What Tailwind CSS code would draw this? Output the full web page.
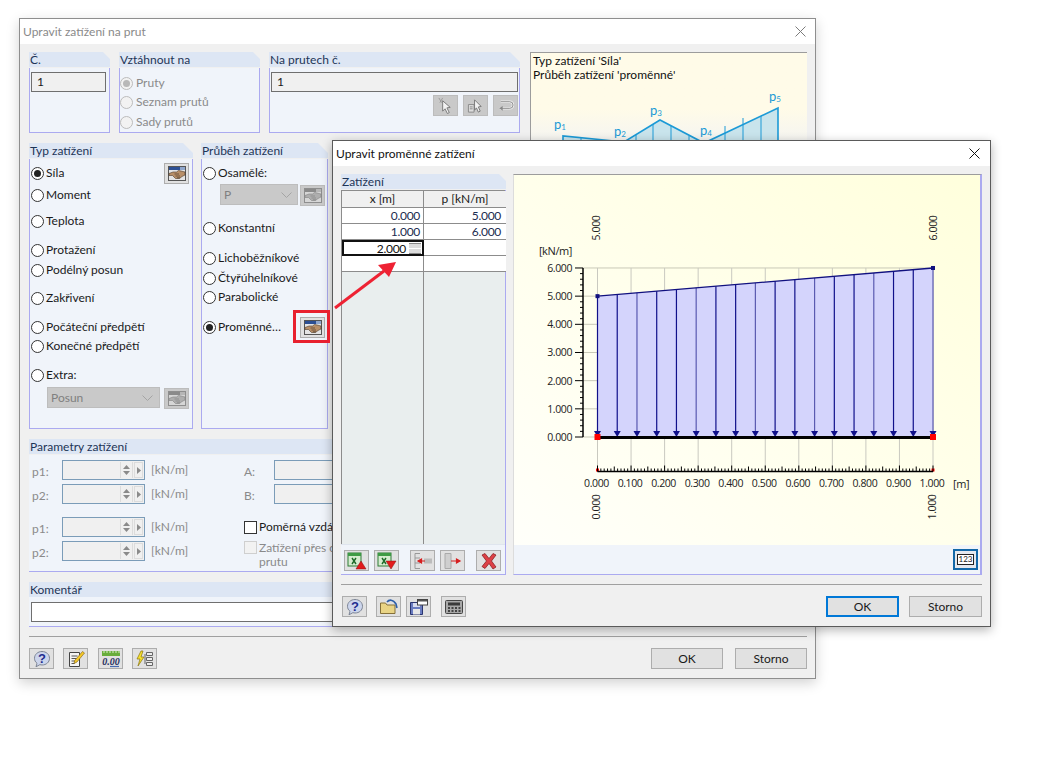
<!DOCTYPE html>
<html lang="en">
<head>
  <meta charset="UTF-8">
  <title>Upravit zatížení na prut</title>
  <script src="https://cdn.jsdelivr.net/npm/@tailwindcss/browser@4"></script>
</head>
<body class="bg-white">
  <svg width="0" height="0" class="absolute">
    <symbol id="i-hand" viewBox="0 0 18 15">
      <rect x="0.5" y="0.5" width="17" height="14" fill="#e4e4e4" stroke="#555"/>
      <rect x="1" y="1" width="11" height="3" fill="#2c4f94"/>
      <rect x="12" y="1" width="5" height="3" fill="#8fa6cc"/>
      <path d="M1 7.500l4-1.500h3.500l2-1.500 2.500.5 4 1v3l-3 1.500-2.500 2H7.500L4.500 9.500H1z" fill="#b88f68" stroke="#4e3a28" stroke-width=".6"/>
      <path d="M6.500 8h4.500M7.500 10h4.500M9 11.800h3" stroke="#4e3a28" stroke-width=".7"/>
    </symbol>
    <symbol id="i-bubble" viewBox="0 0 18 18">
      <path d="M9 1.500c4.200 0 7.500 2.900 7.500 6.800S13.200 15 9 15c-.8 0-1.500-.1-2.200-.3L3 16.800l1-3.500C2.400 12 1.500 10.300 1.500 8.300 1.500 4.400 4.800 1.500 9 1.500z" fill="#ccd5ec" stroke="#7d8595"/>
    </symbol>
    <symbol id="i-note" viewBox="0 0 18 18">
      <path d="M2.500 2.500h10v14h-10z" fill="#f4f4f4" stroke="#444"/>
      <path d="M4.500 6h6M4.500 8.500h5M4.500 11h4M4.500 13.500h3" stroke="#555"/>
      <path d="M15.500 1.500l2 1.500L10 12l-3 1.500.7-3z" fill="#f6c928" stroke="#7a5a10" stroke-width=".6"/>
    </symbol>
    <symbol id="i-bolt" viewBox="0 0 20 18">
      <path d="M6 1L2 9h3l-2 7 6-9H6l2-6z" fill="#f7e02c" stroke="#8a7510" stroke-width=".7"/>
      <path d="M11.500 2.500h6v3h-6zM11.500 7.500h6v3h-6zM11.500 12.500h6v3h-6z" fill="#ececec" stroke="#666"/>
      <path d="M10 4v10" stroke="#666"/>
    </symbol>
    <symbol id="i-xls-up" viewBox="0 0 20 18">
      <rect x="1" y="1" width="13" height="13" fill="#d6ecd0" stroke="#2f7d36"/>
      <path d="M1 1h13v3H1z" fill="#3e9b45"/>
      <path d="M5 6l4 6M9 6l-4 6" stroke="#1c6a28" stroke-width="1.400"/>
      <path d="M14 9l5 8H9z" fill="#e21a1a" stroke="#8a1010" stroke-width=".5"/>
    </symbol>
    <symbol id="i-xls-down" viewBox="0 0 20 18">
      <rect x="1" y="1" width="13" height="13" fill="#d6ecd0" stroke="#2f7d36"/>
      <path d="M1 1h13v3H1z" fill="#3e9b45"/>
      <path d="M5 6l4 6M9 6l-4 6" stroke="#1c6a28" stroke-width="1.400"/>
      <path d="M9 9h10l-5 8z" fill="#e21a1a" stroke="#8a1010" stroke-width=".5"/>
    </symbol>
    <symbol id="i-col-in" viewBox="0 0 20 18">
      <path d="M7 1.500H2v15h5M2 6h5M2 11h5" fill="none" stroke="#999"/>
      <rect x="11" y="6.500" width="8" height="5" fill="#bcbcbc"/>
      <path d="M12 9H6M8.500 7L5 9l3.500 2z" fill="#d62020" stroke="#d62020" stroke-width="1.200"/>
    </symbol>
    <symbol id="i-col-out" viewBox="0 0 20 18">
      <path d="M2 1.500h6v15H2z" fill="#cfcfcf" stroke="#aaa"/>
      <path d="M8 9h8M13.500 7L17 9l-3.500 2z" fill="#d62020" stroke="#d62020" stroke-width="1.200"/>
    </symbol>
    <symbol id="i-del" viewBox="0 0 18 18">
      <path d="M2 3l3-1.500L9 6.500l4-5 3 1.500-4.500 6 4.500 6-3 2L9 11.500 5 16.500l-3-2L6.500 9z" fill="#dd4046" stroke="#7f1518" stroke-width=".7"/>
    </symbol>
    <symbol id="i-open" viewBox="0 0 20 18">
      <path d="M1.500 5h5l1.500 2h8v8.500h-14.500z" fill="#e9d485" stroke="#85703a"/>
      <path d="M8 4c2-2.500 6-3 9 2l1 4" fill="none" stroke="#2d5fa8" stroke-width="1.600"/>
    </symbol>
    <symbol id="i-save" viewBox="0 0 20 18">
      <path d="M1.500 4.500h12v12h-12z" fill="#6a7cc0" stroke="#2a3570"/>
      <rect x="4" y="11" width="7" height="5.500" fill="#e8e8e8"/>
      <rect x="4" y="5" width="7" height="4" fill="#d8ddf0"/>
      <rect x="8.500" y="1.500" width="10" height="5.500" fill="#fff" stroke="#444"/>
      <rect x="9" y="2" width="9" height="1.500" fill="#555"/>
    </symbol>
    <symbol id="i-calc" viewBox="0 0 20 18">
      <rect x="1.500" y="2.500" width="17" height="13" rx="1" fill="#a8a8a8" stroke="#444"/>
      <rect x="4" y="4.500" width="12" height="3" fill="#3a3a3a"/>
      <path d="M4 10h2M7.500 10h2M11 10h2M14.500 10h2M4 13h2M7.500 13h2M11 13h2M14.500 13h2" stroke="#222" stroke-width="1.500"/>
    </symbol>
    <symbol id="i-pick" viewBox="0 0 18 18">
      <path d="M2 1l3 5M6 1L3 6" stroke="#999"/>
      <path d="M6 4l8 7-3.500.5 2.500 5-2 1-2.500-5L6 15z" fill="#f2f2f2" stroke="#777"/>
    </symbol>
    <symbol id="i-pick-list" viewBox="0 0 18 18">
      <path d="M1.500 8h6v8h-6z" fill="#ddd" stroke="#888"/>
      <path d="M3 10.500h3M3 12.500h3" stroke="#888"/>
      <path d="M8 3l7 7-3 .5 2 4.500-2 1-2-4.500L8 14z" fill="#f2f2f2" stroke="#777"/>
    </symbol>
    <symbol id="i-back" viewBox="0 0 18 18">
      <path d="M4 5h9.500a3.500 3.500 0 010 7H3" fill="none" stroke="#f0f0f0" stroke-width="2.500"/>
      <path d="M4 5h9.500a3.500 3.500 0 010 7H3" fill="none" stroke="#888" stroke-width="1"/>
      <path d="M6 9.500L2.500 12 6 14.500z" fill="#888"/>
    </symbol>
  </svg>

  <div class="relative w-[1040px] h-[780px] overflow-hidden bg-white text-[12px] text-[#1a1a1a] font-['Lato',sans-serif]">

    <!-- main dialog -->
    <div class="absolute left-[19px] top-[18px] w-[797px] h-[661px] flex flex-col bg-[#f0f0f0] border border-[#8e8e8e] shadow-[0_4px_12px_rgba(0,0,0,0.18)]">
      <div class="h-[25px] shrink-0 bg-white flex items-center justify-between pl-[3px] pr-[9px] text-[#8a8a8a]">
        <span>Upravit zatížení na prut</span>
        <svg width="11" height="11" viewBox="0 0 11 11"><path d="M.5.5l10 10M10.500.5l-10 10" stroke="#7c7c7c"/></svg>
      </div>
      <div class="flex-1 flex flex-col pl-[9px] pr-[8px] pt-[8px]">
        <div class="flex gap-[10px] h-[377px]">
          <div class="w-[491px] shrink-0 flex flex-col gap-[10px]">
            <div class="flex gap-[9px] h-[81px]">
              <section class="w-[81px] flex flex-col">
                <h3 class="h-[15px] pl-px leading-[15px] font-normal text-[#1d3557] bg-[#dde6f4] [clip-path:polygon(0_0,calc(100%-7px)_0,100%_7px,100%_100%,0_100%)]">Č.</h3>
                <div class="flex-1 mt-px bg-[#f0f4fa] border-x border-b border-[#abaaf0] pl-px pt-[4px]">
                  <div class="w-[75px] h-[20px] bg-[#f0f0f0] border border-[#6f6f6f] pl-[5px] leading-[18px]">1</div>
                </div>
              </section>
              <section class="w-[141px] flex flex-col">
                <h3 class="h-[15px] pl-px leading-[15px] font-normal text-[#1d3557] bg-[#dde6f4] [clip-path:polygon(0_0,calc(100%-7px)_0,100%_7px,100%_100%,0_100%)]">Vztáhnout na</h3>
                <div class="flex-1 mt-px bg-[#f0f4fa] border-x border-b border-[#abaaf0] pt-[8px] text-[#8a8a8a]">
                  <div class="h-[14px] flex items-center gap-[3px]"><span class="w-[13px] h-[13px] rounded-full border border-[#bcbcbc] bg-[#f2f2f2] flex items-center justify-center"><span class="w-[7px] h-[7px] rounded-full bg-[#b8b8b8]"></span></span>Pruty</div>
                  <div class="h-[14px] mt-[5px] flex items-center gap-[3px]"><span class="w-[13px] h-[13px] rounded-full border border-[#bcbcbc] bg-[#f2f2f2]"></span>Seznam prutů</div>
                  <div class="h-[14px] mt-[6px] flex items-center gap-[3px]"><span class="w-[13px] h-[13px] rounded-full border border-[#bcbcbc] bg-[#f2f2f2]"></span>Sady prutů</div>
                </div>
              </section>
              <section class="flex-1 flex flex-col">
                <h3 class="h-[15px] pl-px leading-[15px] font-normal text-[#1d3557] bg-[#dde6f4] [clip-path:polygon(0_0,calc(100%-10px)_0,100%_10px,100%_100%,0_100%)]">Na prutech č.</h3>
                <div class="flex-1 mt-px bg-[#f0f4fa] border-x border-b border-[#abaaf0] pl-px pr-px pt-[4px]">
                  <div class="h-[20px] bg-[#f0f0f0] border border-[#6f6f6f] pl-[5px] leading-[18px]">1</div>
                  <div class="flex justify-end gap-[5px] mt-[3px]">
                    <button class="w-[25px] h-[21px] bg-[#c9c9c9] border border-[#bcbcbc] flex items-center justify-center"><svg width="17" height="17"><use href="#i-pick"/></svg></button>
                    <button class="w-[25px] h-[21px] bg-[#c9c9c9] border border-[#bcbcbc] flex items-center justify-center"><svg width="17" height="17"><use href="#i-pick-list"/></svg></button>
                    <button class="w-[25px] h-[21px] bg-[#c9c9c9] border border-[#bcbcbc] flex items-center justify-center"><svg width="17" height="17"><use href="#i-back"/></svg></button>
                  </div>
                </div>
              </section>
            </div>
            <div class="flex gap-[8px] flex-1 pr-[192px]">
              <section class="w-[164px] flex flex-col shrink-0">
                <h3 class="h-[15px] pl-px leading-[15px] font-normal text-[#1d3557] bg-[#dde6f4] [clip-path:polygon(0_0,calc(100%-10px)_0,100%_10px,100%_100%,0_100%)]">Typ zatížení</h3>
                <div class="flex-1 mt-px bg-[#f0f4fa] border-x border-b border-[#abaaf0] pl-px pr-[3px] pt-[7px]">
                  <div class="h-[14px] flex items-center justify-between">
                    <span class="flex items-center gap-[2px]"><span class="w-[13px] h-[13px] rounded-full border border-[#333] bg-white flex items-center justify-center"><span class="w-[7px] h-[7px] rounded-full bg-[#222]"></span></span>Síla</span>
                    <button class="w-[25px] h-[21px] bg-[#e1e1e1] border border-[#adadad] flex items-center justify-center shrink-0"><svg width="18" height="15"><use href="#i-hand"/></svg></button>
                  </div>
                  <div class="h-[14px] mt-[8px] flex items-center gap-[2px]"><span class="w-[13px] h-[13px] rounded-full border border-[#333] bg-white"></span>Moment</div>
                  <div class="h-[14px] mt-[12px] flex items-center gap-[2px]"><span class="w-[13px] h-[13px] rounded-full border border-[#333] bg-white"></span>Teplota</div>
                  <div class="h-[14px] mt-[15px] flex items-center gap-[2px]"><span class="w-[13px] h-[13px] rounded-full border border-[#333] bg-white"></span>Protažení</div>
                  <div class="h-[14px] mt-[6px] flex items-center gap-[2px]"><span class="w-[13px] h-[13px] rounded-full border border-[#333] bg-white"></span>Podélný posun</div>
                  <div class="h-[14px] mt-[14px] flex items-center gap-[2px]"><span class="w-[13px] h-[13px] rounded-full border border-[#333] bg-white"></span>Zakřivení</div>
                  <div class="h-[14px] mt-[15px] flex items-center gap-[2px]"><span class="w-[13px] h-[13px] rounded-full border border-[#333] bg-white"></span>Počáteční předpětí</div>
                  <div class="h-[14px] mt-[5px] flex items-center gap-[2px]"><span class="w-[13px] h-[13px] rounded-full border border-[#333] bg-white"></span>Konečné předpětí</div>
                  <div class="h-[14px] mt-[15px] flex items-center gap-[2px]"><span class="w-[13px] h-[13px] rounded-full border border-[#333] bg-white"></span>Extra:</div>
                  <div class="flex justify-between items-start mt-[5px] pl-[16px]">
                    <div class="w-[113px] h-[21px] bg-[#c9c9c9] border border-[#bdbdbd] flex items-center justify-between pl-[3px] pr-[6px] text-[#808080]">Posun<svg width="11" height="6" viewBox="0 0 11 6"><path d="M.5.5l5 5 5-5" fill="none" stroke="#a4a4a4"/></svg></div>
                    <button class="w-[25px] h-[21px] mt-px bg-[#c9c9c9] border border-[#bcbcbc] flex items-center justify-center"><svg width="18" height="15" class="opacity-50 grayscale"><use href="#i-hand"/></svg></button>
                  </div>
                </div>
              </section>
              <section class="w-[127px] flex flex-col shrink-0">
                <h3 class="h-[15px] pl-px leading-[15px] font-normal text-[#1d3557] bg-[#dde6f4] [clip-path:polygon(0_0,calc(100%-10px)_0,100%_10px,100%_100%,0_100%)]">Průběh zatížení</h3>
                <div class="flex-1 mt-px bg-[#f0f4fa] border-x border-b border-[#abaaf0] pl-px pt-[7px]">
                  <div class="h-[14px] flex items-center gap-[2px]"><span class="w-[13px] h-[13px] rounded-full border border-[#333] bg-white"></span>Osamělé:</div>
                  <div class="flex items-start gap-[2px] mt-[4px] pl-[17px]">
                    <div class="w-[78px] h-[21px] bg-[#c9c9c9] border border-[#bdbdbd] flex items-center justify-between pl-[3px] pr-[5px] text-[#808080]">P<svg width="11" height="6" viewBox="0 0 11 6"><path d="M.5.5l5 5 5-5" fill="none" stroke="#a4a4a4"/></svg></div>
                    <button class="w-[25px] h-[21px] mt-px bg-[#c9c9c9] border border-[#bcbcbc] flex items-center justify-center"><svg width="18" height="15" class="opacity-50 grayscale"><use href="#i-hand"/></svg></button>
                  </div>
                  <div class="h-[14px] mt-[15px] flex items-center gap-[2px]"><span class="w-[13px] h-[13px] rounded-full border border-[#333] bg-white"></span>Konstantní</div>
                  <div class="h-[14px] mt-[16px] flex items-center gap-[2px]"><span class="w-[13px] h-[13px] rounded-full border border-[#333] bg-white"></span>Lichoběžníkové</div>
                  <div class="h-[14px] mt-[6px] flex items-center gap-[2px]"><span class="w-[13px] h-[13px] rounded-full border border-[#333] bg-white"></span>Čtyřúhelníkové</div>
                  <div class="h-[14px] mt-[5px] flex items-center gap-[2px]"><span class="w-[13px] h-[13px] rounded-full border border-[#333] bg-white"></span>Parabolické</div>
                  <div class="h-[14px] mt-[16px] flex items-center justify-between pr-[2px]">
                    <span class="flex items-center gap-[2px]"><span class="w-[13px] h-[13px] rounded-full border border-[#333] bg-white flex items-center justify-center"><span class="w-[7px] h-[7px] rounded-full bg-[#222]"></span></span>Proměnné…</span>
                    <button class="w-[25px] h-[21px] bg-[#e1e1e1] border border-[#adadad] flex items-center justify-center shrink-0"><svg width="18" height="15"><use href="#i-hand"/></svg></button>
                  </div>
                </div>
              </section>
            </div>
          </div>
          <!-- preview of the load shape -->
          <div class="flex-1 relative border-t border-l border-[#9c9c9c] bg-linear-to-b from-[#fffbe8] from-[15%] to-[#f4f4f2] to-[24%] pl-[2px] pt-[1px] leading-[14px] text-[#111]">
            <p>Typ zatížení 'Síla'</p>
            <p>Průběh zatížení 'proměnné'</p>
            <svg class="absolute left-0 top-0" width="277" height="150" viewBox="530 52 277 150">
              <path d="M562 135L623 141L659 119L703 142L777 107V200H562z" fill="#c9e4ec"/>
              <path d="M580 137V200M598 139V200M616 141V200M635 134V200M652 123V200M670 125V200M688 135V200M724 125V200M742 117V200M760 115V200" stroke="#1c9ad6" stroke-width="1"/>
              <path d="M562 200V135L623 141L659 119L703 142L777 107V200" fill="none" stroke="#1c9ad6" stroke-width="1.600"/>
              <g fill="#1c9ad6" font-size="13" font-family="Lato">
                <text x="553" y="128">p<tspan font-size="8" dy="1">1</tspan></text>
                <text x="613" y="135">p<tspan font-size="8" dy="1">2</tspan></text>
                <text x="649" y="114">p<tspan font-size="8" dy="1">3</tspan></text>
                <text x="699" y="134">p<tspan font-size="8" dy="1">4</tspan></text>
                <text x="768" y="100">p<tspan font-size="8" dy="1">5</tspan></text>
              </g>
            </svg>
          </div>
        </div>

        <section class="mt-[10px] h-[133px] flex flex-col">
          <h3 class="h-[15px] pl-px leading-[15px] font-normal text-[#1d3557] bg-[#dde6f4]">Parametry zatížení</h3>
          <div class="flex-1 mt-px bg-[#f0f4fa] border-b border-[#abaaf0] flex pt-[5px] text-[#8a8a8a]">
            <div class="w-[215px] pl-[3px] shrink-0">
              <div class="h-[20px] flex items-center"><span class="w-[30px] pt-[3px]">p1:</span>
                <div class="w-[83px] h-[20px] bg-[#f0f0f0] border border-[#7b9cb8] flex items-center justify-end pr-px">
                  <span class="w-[13px] h-[16px] flex flex-col items-center justify-center gap-[2px] border-x border-[#dcdcdc]"><svg width="7" height="4"><path d="M3.500 0l3.500 4H0z" fill="#8a8a8a"/></svg><svg width="7" height="4"><path d="M0 0h7L3.500 4z" fill="#8a8a8a"/></svg></span>
                  <span class="w-[9px] h-[16px] ml-px flex items-center justify-center border border-[#dcdcdc]"><svg width="4" height="7"><path d="M0 0l4 3.500L0 7z" fill="#8a8a8a"/></svg></span>
                </div><span class="ml-[6px]">[kN/m]</span></div>
              <div class="h-[20px] mt-[4px] flex items-center"><span class="w-[30px] pt-[3px]">p2:</span>
                <div class="w-[83px] h-[20px] bg-[#f0f0f0] border border-[#7b9cb8] flex items-center justify-end pr-px">
                  <span class="w-[13px] h-[16px] flex flex-col items-center justify-center gap-[2px] border-x border-[#dcdcdc]"><svg width="7" height="4"><path d="M3.500 0l3.500 4H0z" fill="#8a8a8a"/></svg><svg width="7" height="4"><path d="M0 0h7L3.500 4z" fill="#8a8a8a"/></svg></span>
                  <span class="w-[9px] h-[16px] ml-px flex items-center justify-center border border-[#dcdcdc]"><svg width="4" height="7"><path d="M0 0l4 3.500L0 7z" fill="#8a8a8a"/></svg></span>
                </div><span class="ml-[6px]">[kN/m]</span></div>
              <div class="h-[20px] mt-[13px] flex items-center"><span class="w-[30px] pt-[3px]">p1:</span>
                <div class="w-[83px] h-[20px] bg-[#f0f0f0] border border-[#7b9cb8] flex items-center justify-end pr-px">
                  <span class="w-[13px] h-[16px] flex flex-col items-center justify-center gap-[2px] border-x border-[#dcdcdc]"><svg width="7" height="4"><path d="M3.500 0l3.500 4H0z" fill="#8a8a8a"/></svg><svg width="7" height="4"><path d="M0 0h7L3.500 4z" fill="#8a8a8a"/></svg></span>
                  <span class="w-[9px] h-[16px] ml-px flex items-center justify-center border border-[#dcdcdc]"><svg width="4" height="7"><path d="M0 0l4 3.500L0 7z" fill="#8a8a8a"/></svg></span>
                </div><span class="ml-[6px]">[kN/m]</span></div>
              <div class="h-[20px] mt-[4px] flex items-center"><span class="w-[30px] pt-[3px]">p2:</span>
                <div class="w-[83px] h-[20px] bg-[#f0f0f0] border border-[#7b9cb8] flex items-center justify-end pr-px">
                  <span class="w-[13px] h-[16px] flex flex-col items-center justify-center gap-[2px] border-x border-[#dcdcdc]"><svg width="7" height="4"><path d="M3.500 0l3.500 4H0z" fill="#8a8a8a"/></svg><svg width="7" height="4"><path d="M0 0h7L3.500 4z" fill="#8a8a8a"/></svg></span>
                  <span class="w-[9px] h-[16px] ml-px flex items-center justify-center border border-[#dcdcdc]"><svg width="4" height="7"><path d="M0 0l4 3.500L0 7z" fill="#8a8a8a"/></svg></span>
                </div><span class="ml-[6px]">[kN/m]</span></div>
            </div>
            <div class="flex-1">
              <div class="h-[20px] flex items-center"><span class="w-[30px] pt-[3px]">A:</span><div class="w-[120px] h-[20px] bg-[#f0f0f0] border border-[#7b9cb8]"></div></div>
              <div class="h-[20px] mt-[4px] flex items-center"><span class="w-[30px] pt-[3px]">B:</span><div class="w-[120px] h-[20px] bg-[#f0f0f0] border border-[#7b9cb8]"></div></div>
              <div class="h-[14px] mt-[16px] flex items-center gap-[2px] text-[#1a1a1a]"><span class="w-[13px] h-[13px] border border-[#333] bg-white"></span>Poměrná vzdálenost</div>
              <div class="mt-[7px] flex items-start gap-[2px] w-[260px]"><span class="w-[13px] h-[13px] shrink-0 border border-[#cfcfcf] bg-[#f2f2f2]"></span><span class="leading-[14px]">Zatížení přes celou délku<br>prutu</span></div>
            </div>
          </div>
        </section>

        <section class="mt-[10px] h-[45px] flex flex-col">
          <h3 class="h-[15px] pl-px leading-[15px] font-normal text-[#1d3557] bg-[#dde6f4]">Komentář</h3>
          <div class="flex-1 bg-[#f0f4fa] border-b border-[#abaaf0] pl-[2px] pr-[2px] pt-[5px]">
            <div class="h-[20px] bg-white border border-[#6f6f6f]"></div>
          </div>
        </section>

        <div class="mt-[9px] h-px bg-[#a0a0a0]"></div>

        <div class="mt-[11px] flex justify-between">
          <div class="flex">
            <button class="w-[25px] h-[21px] bg-[#e1e1e1] border border-[#adadad] flex items-center justify-center"><svg width="18" height="18" viewBox="0 0 18 18"><use href="#i-bubble"/><text x="9" y="13" text-anchor="middle" font-size="13" font-weight="700" font-family="Liberation Sans" fill="#1f2d8f">?</text></svg></button>
            <button class="w-[25px] h-[21px] ml-[9px] bg-[#e1e1e1] border border-[#adadad] flex items-center justify-center"><svg width="18" height="18"><use href="#i-note"/></svg></button>
            <button class="w-[25px] h-[21px] ml-[10px] bg-[#e1e1e1] border border-[#adadad] flex items-center justify-center"><svg width="20" height="18" viewBox="0 0 20 18"><rect x="1" y="1" width="18" height="5" fill="#68ad3c"/><path d="M3 1v2M6 1v2M9 1v2M12 1v2M15 1v2M18 1v2" stroke="#d8eec8"/><text x="10" y="14.500" text-anchor="middle" font-size="10" font-style="italic" font-weight="700" font-family="Liberation Serif" fill="#27305e">0.00</text><path d="M9 16.500h9" stroke="#4a6cb0" stroke-width="1.200"/></svg></button>
            <button class="w-[25px] h-[21px] ml-[9px] bg-[#e1e1e1] border border-[#adadad] flex items-center justify-center"><svg width="20" height="18"><use href="#i-bolt"/></svg></button>
          </div>
          <div class="flex gap-[12px]">
            <button class="w-[72px] h-[21px] bg-[#e1e1e1] border border-[#adadad]">OK</button>
            <button class="w-[72px] h-[21px] bg-[#e1e1e1] border border-[#adadad]">Storno</button>
          </div>
        </div>
      </div>
    </div>

    <!-- variable load dialog -->
    <div class="absolute left-[332px] top-[140px] w-[659px] h-[487px] flex flex-col bg-[#f0f0f0] border border-[#5a5a5a] shadow-[0_3px_10px_rgba(0,0,0,0.3)]">
      <div class="h-[25px] shrink-0 bg-white flex items-center justify-between pl-[3px] pr-[10px] text-[#111]">
        <span>Upravit proměnné zatížení</span>
        <svg width="11" height="11" viewBox="0 0 11 11"><path d="M.5.5l10 10M10.500.5l-10 10" stroke="#111"/></svg>
      </div>
      <div class="flex-1 flex flex-col px-[8px] pt-[8px]">
        <div class="h-[401px] flex gap-[7px]">
          <section class="w-[165px] flex flex-col shrink-0">
            <h3 class="h-[15px] pl-px leading-[15px] font-normal text-[#1d3557] bg-[#dde6f4] [clip-path:polygon(0_0,calc(100%-7px)_0,100%_7px,100%_100%,0_100%)]">Zatížení</h3>
            <div class="flex-1 mt-px border-r border-b border-[#abaaf0] bg-[#f0f4fa] flex flex-col">
              <div class="flex-1 grid grid-cols-[82px_82px] grid-rows-[17px_16px_16px_16px_16px_1fr] border-l border-t border-[#8c8c8c] bg-[#e9eeee]">
                <div class="bg-[#f0f0f0] border-r border-b border-[#8c8c8c] text-center leading-[16px]">x [m]</div>
                <div class="bg-[#f0f0f0] border-b border-[#8c8c8c] text-center leading-[16px]">p [kN/m]</div>
                <div class="bg-white border-r border-b border-[#8c8c8c] text-right pr-[3px] leading-[15px] tracking-[-0.3px] text-[#1c2c50]">0.000</div>
                <div class="bg-white border-b border-[#8c8c8c] text-right pr-[5px] leading-[15px] tracking-[-0.3px] text-[#1c2c50]">5.000</div>
                <div class="bg-white border-r border-b border-[#8c8c8c] text-right pr-[3px] leading-[15px] tracking-[-0.3px] text-[#1c2c50]">1.000</div>
                <div class="bg-white border-b border-[#8c8c8c] text-right pr-[5px] leading-[15px] tracking-[-0.3px] text-[#1c2c50]">6.000</div>
                <div class="bg-white border-2 border-[#111] flex items-center justify-end pr-px leading-[13px] tracking-[-0.3px] text-[#111]">2.000
                  <span class="w-[12px] h-[11px] ml-[3px] flex flex-col gap-px"><span class="flex-1 bg-[#dcdcdc] border-t border-[#888]"></span><span class="flex-1 bg-[#dcdcdc] border-b border-[#888]"></span></span>
                </div>
                <div class="bg-white border-b border-[#8c8c8c]"></div>
                <div class="bg-white border-r border-b border-[#8c8c8c]"></div>
                <div class="bg-white border-b border-[#8c8c8c]"></div>
                <div class="border-r border-[#8c8c8c]"></div>
                <div></div>
              </div>
              <div class="h-[30px] shrink-0 flex pl-[3px] pt-[5px] border-t border-[#dfe5ee]">
                <button class="w-[25px] h-[21px] bg-[#e1e1e1] border border-[#adadad] flex items-center justify-center"><svg width="20" height="18"><use href="#i-xls-up"/></svg></button>
                <button class="w-[25px] h-[21px] ml-[5px] bg-[#e1e1e1] border border-[#adadad] flex items-center justify-center"><svg width="20" height="18"><use href="#i-xls-down"/></svg></button>
                <button class="w-[25px] h-[21px] ml-[11px] bg-[#e1e1e1] border border-[#adadad] flex items-center justify-center"><svg width="20" height="18"><use href="#i-col-in"/></svg></button>
                <button class="w-[25px] h-[21px] ml-[5px] bg-[#e1e1e1] border border-[#adadad] flex items-center justify-center"><svg width="20" height="18"><use href="#i-col-out"/></svg></button>
                <button class="w-[25px] h-[21px] ml-[11px] bg-[#e1e1e1] border border-[#adadad] flex items-center justify-center"><svg width="18" height="18"><use href="#i-del"/></svg></button>
              </div>
            </div>
          </section>
          <section class="flex-1 flex flex-col border-t border-[#9c9c9c] border-r-2 border-r-[#abaaf0] border-b border-b-[#abaaf0] border-l border-l-[#dcdcdc]">
            <svg id="chart" class="block h-[370px] w-full bg-linear-to-tr from-[#fffffa] to-[#ffffdc] tracking-[-0.4px]" viewBox="514 175 466 370" font-family="Open Sans" font-size="10.500" fill="#222"></svg>
            <div class="flex-1 bg-[#f0f4fa] flex justify-end items-start pr-[2px] pt-[4px]">
              <button class="w-[25px] h-[21px] border-2 border-[#1268a8] bg-[#e4e8ee] flex items-center justify-center"><span class="w-[17px] h-[11px] border border-[#222] bg-white text-[8px] leading-[9px] text-center">123</span></button>
            </div>
          </section>
        </div>
        <div class="mt-[9px] h-px bg-[#a0a0a0]"></div>
        <div class="mt-[11px] flex justify-between">
          <div class="flex">
            <button class="w-[25px] h-[21px] ml-px bg-[#e1e1e1] border border-[#adadad] flex items-center justify-center"><svg width="18" height="18" viewBox="0 0 18 18"><use href="#i-bubble"/><text x="9" y="13" text-anchor="middle" font-size="13" font-weight="700" font-family="Liberation Sans" fill="#1f2d8f">?</text></svg></button>
            <button class="w-[25px] h-[21px] ml-[9px] bg-[#e1e1e1] border border-[#adadad] flex items-center justify-center"><svg width="20" height="18"><use href="#i-open"/></svg></button>
            <button class="w-[25px] h-[21px] ml-[5px] bg-[#e1e1e1] border border-[#adadad] flex items-center justify-center"><svg width="20" height="18"><use href="#i-save"/></svg></button>
            <button class="w-[25px] h-[21px] ml-[10px] bg-[#e1e1e1] border border-[#adadad] flex items-center justify-center"><svg width="20" height="18"><use href="#i-calc"/></svg></button>
          </div>
          <div class="flex gap-[10px]">
            <button class="w-[73px] h-[21px] bg-[#e1e1e1] border-2 border-[#0078d7]">OK</button>
            <button class="w-[73px] h-[21px] bg-[#e1e1e1] border border-[#adadad]">Storno</button>
          </div>
        </div>
      </div>
    </div>

    <!-- red annotations -->
    <div class="absolute left-[293px] top-[310px] w-[37px] h-[33px] border-[3px] border-[#e8202e]"></div>
    <svg class="absolute left-[330px] top-[255px]" width="75" height="60" viewBox="330 255 75 60">
      <path d="M335 308L384 271" stroke="#ee2233" stroke-width="3"/>
      <path d="M396 262L378 265L389 277z" fill="#ee2233"/>
    </svg>
  </div>

  <script>
    // chart coordinates are page pixels, the viewBox maps them onto the panel
    const x0 = 597.5, x1 = 933, yZero = 437, unit = 28.17, axisY = 471.5;
    let s = '';
    const line = (a, b, c, d, col, w) => `<line x1="${a}" y1="${b}" x2="${c}" y2="${d}" stroke="${col}" stroke-width="${w}"/>`;
    const yTop = 437 - 5 * unit, yEnd = 437 - 6 * unit;

    for (let i = 0; i <= 6; i++) s += line(583, yZero - i * unit, x1, yZero - i * unit, '#c9c9b8', 1);
    for (let i = 0; i <= 10; i++) {
      const x = x0 + (x1 - x0) * i / 10;
      s += line(x, yEnd, x, axisY, '#c9c9c0', 1);
    }

    s += `<path d="M${x0} ${yTop}L${x1} ${yEnd}V${yZero}H${x0}z" fill="#d4d4fc"/>`;
    for (let i = 0; i <= 17; i++) {
      const x = x0 + (x1 - x0) * i / 17;
      const top = yTop + (yEnd - yTop) * i / 17;
      s += line(x, top, x, yZero - 3, i % 3 == 2 ? '#5a5ab0' : '#10108a', 1.2);
      s += `<path d="M${x - 3.5} ${yZero - 6}h7l-3.500 6z" fill="#10108a"/>`;
    }
    s += line(x0, yTop, x1, yEnd, '#10107f', 1.300);
    s += `<rect x="${x0 - 2}" y="${yTop - 2}" width="4" height="4" fill="#10107f"/><rect x="${x1 - 2}" y="${yEnd - 2}" width="4" height="4" fill="#10107f"/>`;
    s += line(x0, yZero + .5, x1, yZero + .5, '#000', 3);
    s += `<rect x="${x0 - 3}" y="${yZero - 3}" width="6" height="6" fill="#f00"/><rect x="${x1 - 3}" y="${yZero - 3}" width="6" height="6" fill="#f00"/>`;
    s += `<rect x="${x0 - 1.500}" y="468.500" width="3" height="3" fill="#f00"/><rect x="${x1 - 1.500}" y="468.500" width="3" height="3" fill="#f00"/>`;

    // y axis
    s += line(583, yEnd, 583, yZero, '#000', 1.500);
    for (let i = 0; i <= 30; i++) {
      const y = yZero - i * unit / 5;
      s += line(i % 5 ? 580 : 575, y, 583, y, '#000', 1);
    }
    for (let i = 0; i <= 6; i++) s += `<text x="572" y="${yZero - i * unit + 4}" text-anchor="end">${i}.000</text>`;
    s += `<text x="572" y="255" text-anchor="end" font-size="11">[kN/m]</text>`;

    // x axis
    s += line(x0, axisY, x1, axisY, '#000', 1.500);
    for (let i = 0; i <= 100; i++) {
      const x = x0 + (x1 - x0) * i / 100;
      s += line(x, axisY - (i % 10 == 0 ? 6 : i % 5 == 0 ? 5 : 3), x, axisY, '#000', 1);
    }
    for (let i = 0; i <= 10; i++) s += `<text x="${x0 + (x1 - x0) * i / 10 - 1}" y="487" text-anchor="middle">${(i / 10).toFixed(3)}</text>`;
    s += `<text x="953" y="488" font-size="11">[m]</text>`;

    // values along the beam
    const rotated = (x, y, t) => `<text transform="translate(${x} ${y}) rotate(-90)" text-anchor="middle">${t}</text>`;
    s += rotated(600, 228, '5.000') + rotated(937, 228, '6.000') + rotated(600, 507, '0.000') + rotated(936, 507, '1.000');

    document.getElementById('chart').innerHTML = s;
  </script>
</body>
</html>
